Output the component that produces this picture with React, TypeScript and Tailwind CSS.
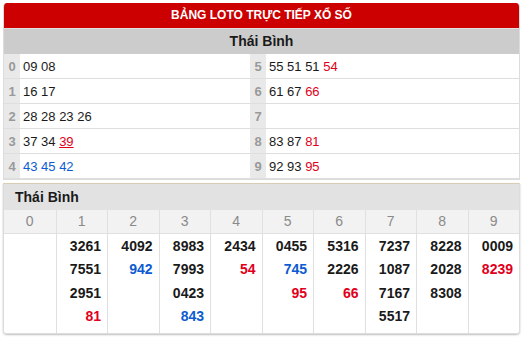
type Num = { v: string; c?: 'red' | 'blue'; u?: boolean };

const loto: Num[][] = [
  [{ v: '09' }, { v: '08' }],
  [{ v: '16' }, { v: '17' }],
  [{ v: '28' }, { v: '28' }, { v: '23' }, { v: '26' }],
  [{ v: '37' }, { v: '34' }, { v: '39', c: 'red', u: true }],
  [{ v: '43', c: 'blue' }, { v: '45', c: 'blue' }, { v: '42', c: 'blue' }],
  [{ v: '55' }, { v: '51' }, { v: '51' }, { v: '54', c: 'red' }],
  [{ v: '61' }, { v: '67' }, { v: '66', c: 'red' }],
  [],
  [{ v: '83' }, { v: '87' }, { v: '81', c: 'red' }],
  [{ v: '92' }, { v: '93' }, { v: '95', c: 'red' }],
];

const heads: Num[][] = [
  [],
  [{ v: '3261' }, { v: '7551' }, { v: '2951' }, { v: '81', c: 'red' }],
  [{ v: '4092' }, { v: '942', c: 'blue' }],
  [{ v: '8983' }, { v: '7993' }, { v: '0423' }, { v: '843', c: 'blue' }],
  [{ v: '2434' }, { v: '54', c: 'red' }],
  [{ v: '0455' }, { v: '745', c: 'blue' }, { v: '95', c: 'red' }],
  [{ v: '5316' }, { v: '2226' }, { v: '66', c: 'red' }],
  [{ v: '7237' }, { v: '1087' }, { v: '7167' }, { v: '5517' }],
  [{ v: '8228' }, { v: '2028' }, { v: '8308' }],
  [{ v: '0009' }, { v: '8239', c: 'red' }],
];

function color(n: Num) {
  if (n.c === 'red') return 'text-[#e0001b]';
  if (n.c === 'blue') return 'text-[#0d5bd1]';
  return 'text-[#1a1a1a]';
}

function LotoCell({ d }: { d: number }) {
  return (
    <div className="flex h-[25px] border-b border-[#dedede]">
      <div className="w-[16px] shrink-0 bg-[#e9e9e9] text-[#9a9a9a] font-bold text-[13px] leading-[25px] text-center">
        {d}
      </div>
      <div className="flex-1 bg-white pl-[3px] text-[13px] leading-[25px] flex gap-[3.6px]">
        {loto[d].map((n, i) => (
          <span key={i} className={`${color(n)} ${n.u ? 'underline' : ''}`}>
            {n.v}
          </span>
        ))}
      </div>
    </div>
  );
}

export default function App() {
  return (
    <div className="bg-white w-[526px] h-[337px] pt-[3px] pl-[3px]" style={{ fontFamily: '"Liberation Sans", Arial, sans-serif' }}>
      <div className="w-[517px] border border-[#dcdcdc] border-t-0 rounded-t-[4px] overflow-hidden bg-[#e9e9e9]">
        <div className="h-[25px] bg-[#cc0000] text-white font-bold text-[12px] leading-[25px] text-center">
          BẢNG LOTO TRỰC TIẾP XỔ SỐ
        </div>
        <div className="h-[26px] bg-[#cccccc] border-t border-[#e0e0e0] text-[#1a1a1a] font-bold text-[14px] leading-[25px] text-center">
          Thái Bình
        </div>
        <div className="grid grid-cols-[246px_1fr]">
          <div>
            {[0, 1, 2, 3, 4].map((d) => (
              <LotoCell key={d} d={d} />
            ))}
          </div>
          <div>
            {[5, 6, 7, 8, 9].map((d) => (
              <LotoCell key={d} d={d} />
            ))}
          </div>
        </div>
      </div>

      <div className="mt-[3px] w-[517px] border border-[#dcdcdc] border-t-[#d8ceb4] rounded-b-[4px] shadow-[0_1px_2px_rgba(0,0,0,0.25)] overflow-hidden">
        <div className="h-[26px] bg-[#e2e2e2] pl-[11px] text-[#1a1a1a] font-bold text-[14px] leading-[26px]">
          Thái Bình
        </div>
        <div className="grid grid-cols-10 bg-[#f2f2f2] h-[24px] border-b border-[#e0e0e0]">
          {heads.map((_, d) => (
            <div
              key={d}
              className={`text-center text-[#8a8a8a] text-[14px] leading-[23px] ${d > 0 ? 'border-l border-[#e0e0e0]' : ''}`}
            >
              {d}
            </div>
          ))}
        </div>
        <div className="grid grid-cols-10 bg-white">
          {heads.map((col, d) => (
            <div
              key={d}
              className={`pt-[1px] pb-[5px] pr-[6px] text-right font-bold text-[14px] leading-[23.3px] ${d > 0 ? 'border-l border-[#e0e0e0]' : ''}`}
            >
              {col.map((n, i) => (
                <div key={i} className={color(n)}>
                  {n.v}
                </div>
              ))}
            </div>
          ))}
        </div>
      </div>
    </div>
  );
}
